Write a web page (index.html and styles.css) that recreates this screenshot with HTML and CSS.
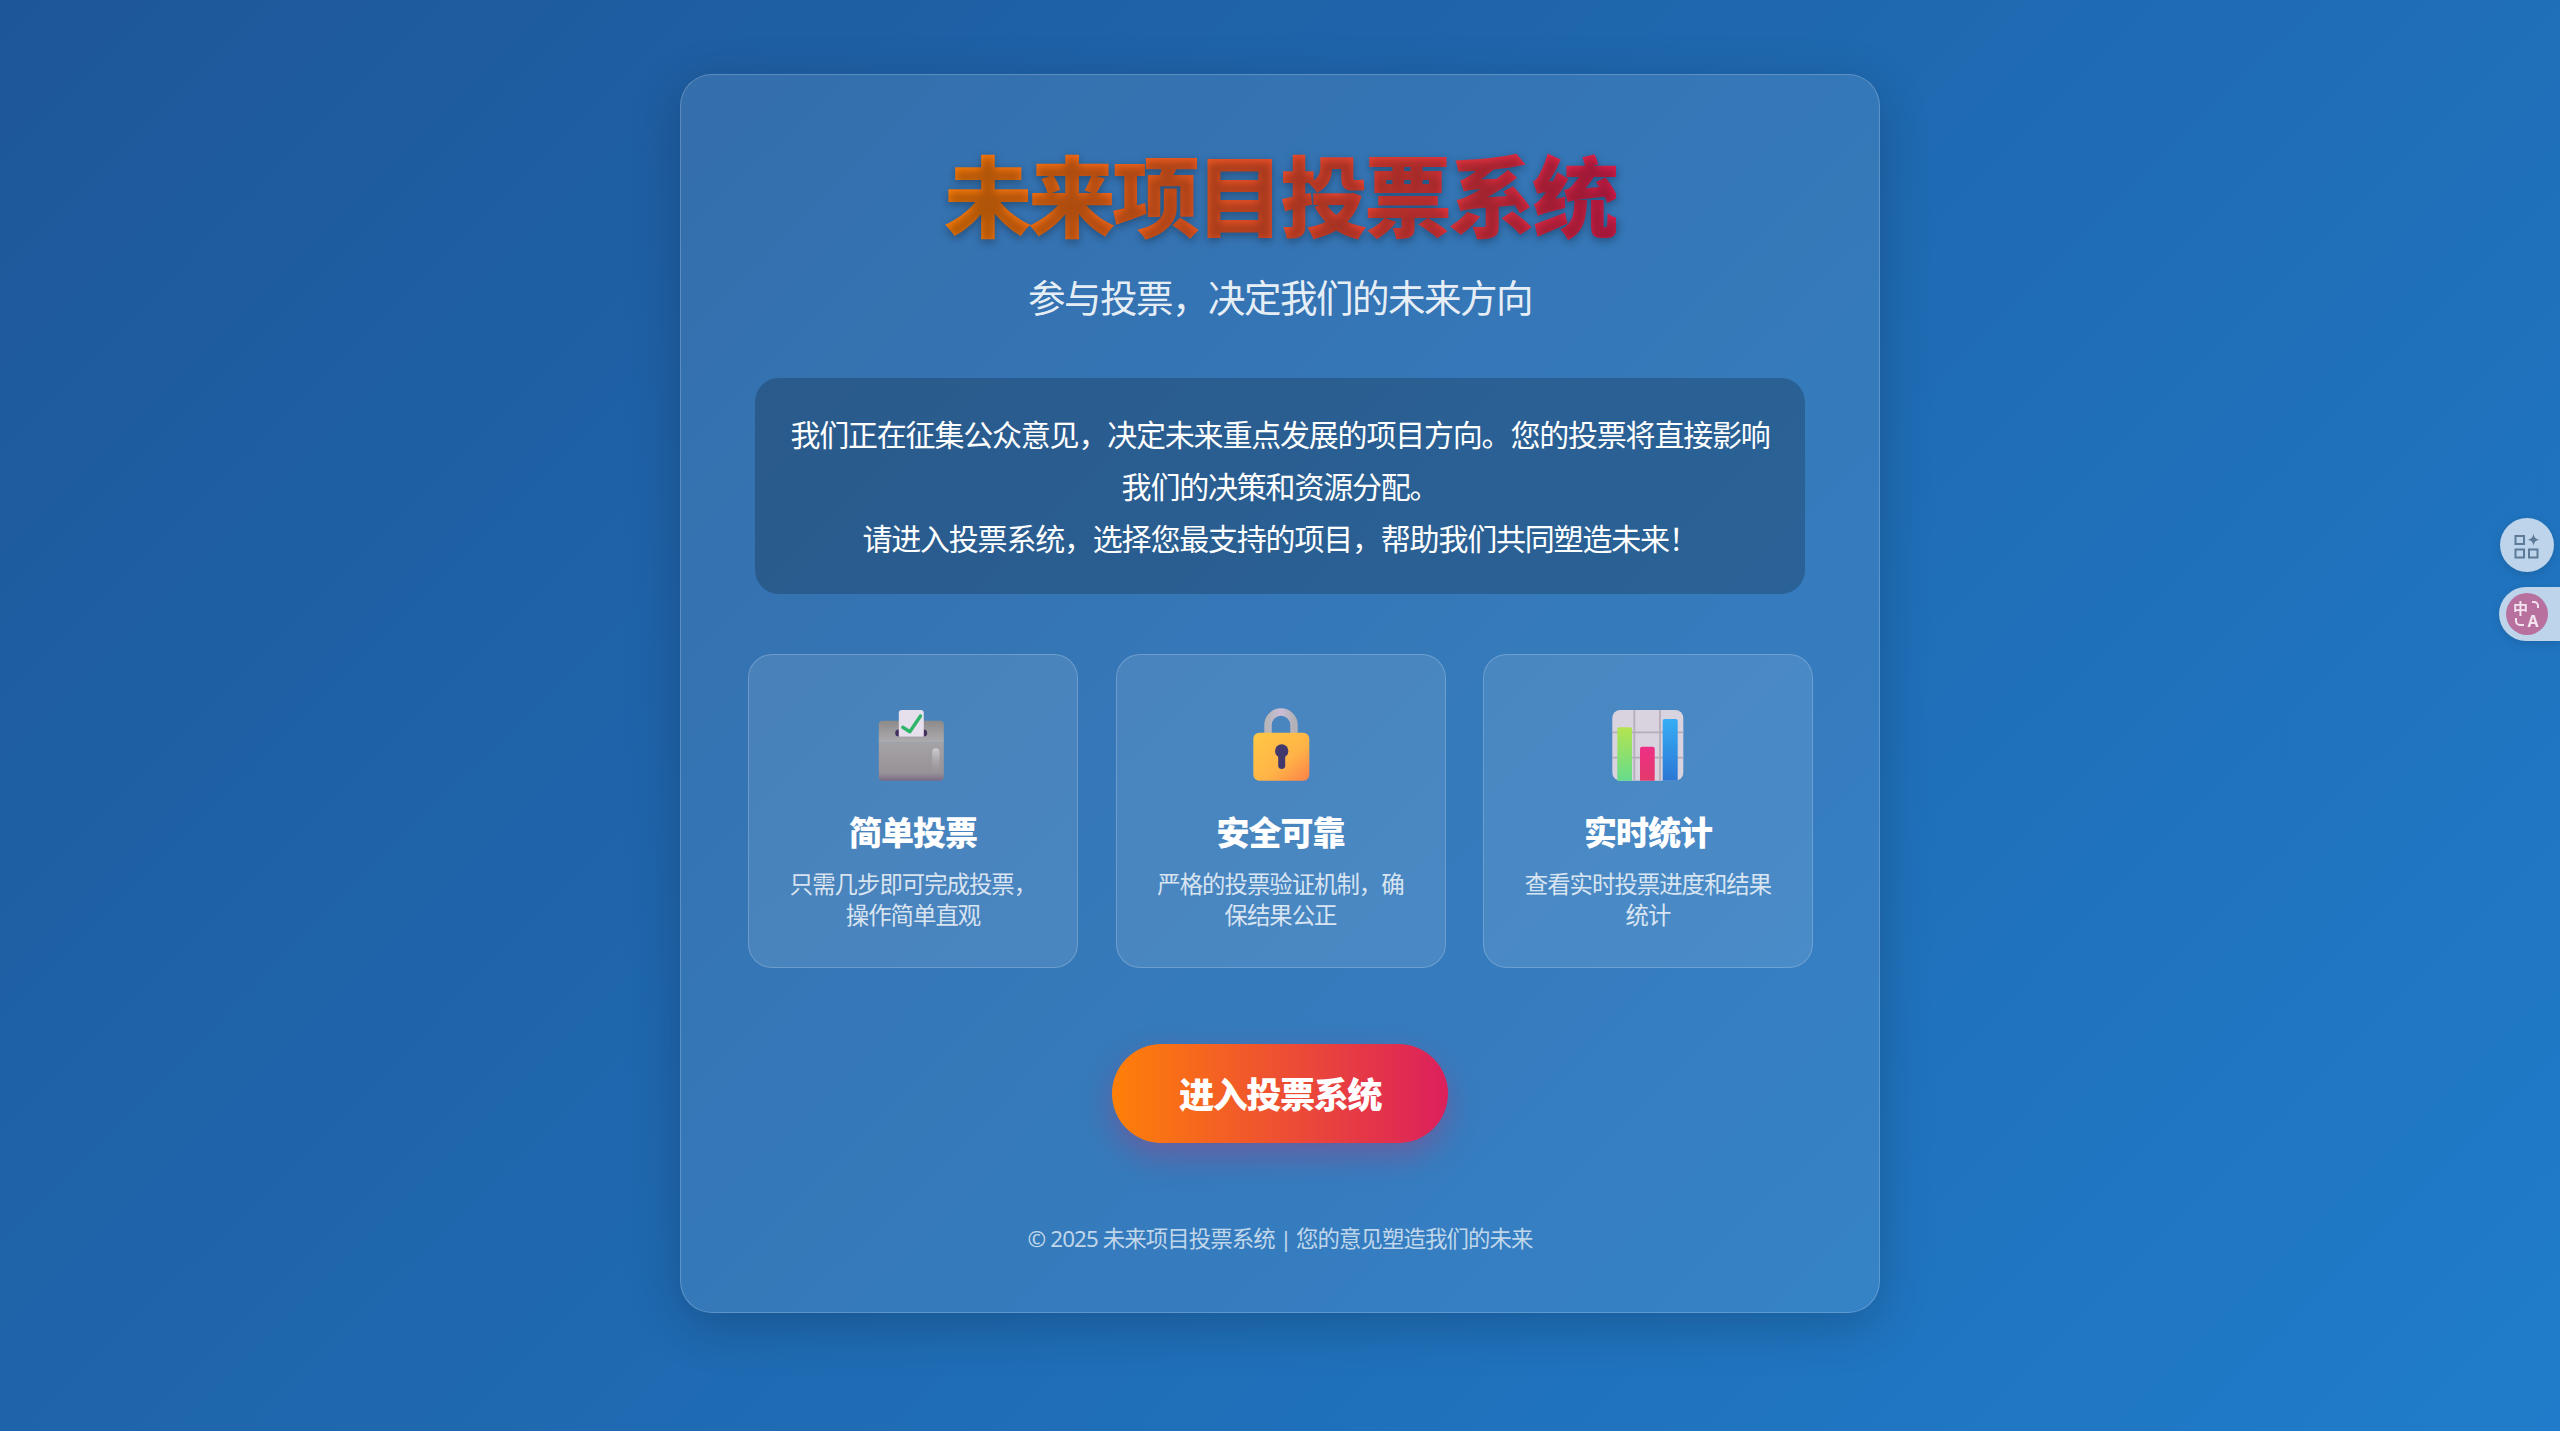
FILE: index.html
```html
<!DOCTYPE html>
<html lang="zh-CN">
<head>
    <meta charset="UTF-8">
    <meta name="viewport" content="width=device-width, initial-scale=1.0">
    <title>未来项目投票系统</title>
    <link rel="stylesheet" href="styles.css">
</head>
<body>
    <main class="panel">
        <h1 class="title">未来项目投票系统</h1>
        <p class="subtitle">参与投票&#xFF0C;决定我们的未来方向</p>

        <div class="info">
            <p>我们正在征集公众意见&#xFF0C;决定未来重点发展的项目方向&#x3002;您的投票将直接影响<br>我们的决策和资源分配&#x3002;</p>
            <p>请进入投票系统&#xFF0C;选择您最支持的项目&#xFF0C;帮助我们共同塑造未来&#xFF01;</p>
        </div>

        <div class="features">
            <div class="feature">
                <svg class="feature-icon" viewBox="0 0 76 76">
                    <defs>
                        <linearGradient id="boxTop" x1="0" y1="0" x2="0" y2="1">
                            <stop offset="0" stop-color="#8d8a8a"/>
                            <stop offset="1" stop-color="#aeacae"/>
                        </linearGradient>
                        <linearGradient id="boxBody" x1="0" y1="0" x2="0" y2="1">
                            <stop offset="0" stop-color="#a5a2a5"/>
                            <stop offset="0.8" stop-color="#979297"/>
                            <stop offset="1" stop-color="#7b6a86"/>
                        </linearGradient>
                        <linearGradient id="boxShine" x1="0" y1="0" x2="0" y2="1">
                            <stop offset="0" stop-color="#cfcdd0"/>
                            <stop offset="1" stop-color="#a09da0" stop-opacity="0.3"/>
                        </linearGradient>
                    </defs>
                    <path d="M3.8 35.7V17.7a4 4 0 0 1 4-4h57a4 4 0 0 1 4 4v18z" fill="url(#boxTop)"/>
                    <path d="M3.8 35.7h65v34a4 4 0 0 1-4 4h-57a4 4 0 0 1-4-4z" fill="url(#boxBody)"/>
                    <rect x="20.2" y="22.5" width="32" height="7" rx="3.5" fill="#43305f"/>
                    <path d="M23.8 29.7V6a3 3 0 0 1 3-3h19a3 3 0 0 1 3 3v23.7z" fill="#e6e0ec"/>
                    <path d="M27.8 20.3l7 4.4L45.5 9" fill="none" stroke="#2fb56a" stroke-width="3.4" stroke-linecap="round" stroke-linejoin="round"/>
                    <rect x="57.2" y="41.3" width="7.3" height="22" rx="3.6" fill="url(#boxShine)"/>
                </svg>
                <h3>简单投票</h3>
                <p>只需几步即可完成投票&#xFF0C;操作简单直观</p>
            </div>
            <div class="feature">
                <svg class="feature-icon" viewBox="0 0 76 76">
                    <defs>
                        <linearGradient id="lockBody" x1="0" y1="0" x2="1" y2="1">
                            <stop offset="0" stop-color="#ffc844"/>
                            <stop offset="0.6" stop-color="#ffb347"/>
                            <stop offset="1" stop-color="#fb8148"/>
                        </linearGradient>
                        <linearGradient id="lockBar" x1="0" y1="0" x2="1" y2="0">
                            <stop offset="0" stop-color="#b8b6ba"/>
                            <stop offset="0.5" stop-color="#cbbdd6"/>
                            <stop offset="1" stop-color="#b2b1b6"/>
                        </linearGradient>
                    </defs>
                    <path d="M25 28V18a13 13 0 0 1 26 0v10" fill="none" stroke="url(#lockBar)" stroke-width="7.4"/>
                    <rect x="10.3" y="25.7" width="56" height="48" rx="6" fill="url(#lockBody)"/>
                    <circle cx="38.7" cy="44" r="6.7" fill="#43386b"/>
                    <rect x="35.2" y="44" width="7" height="18" rx="3.4" fill="#43386b"/>
                </svg>
                <h3>安全可靠</h3>
                <p>严格的投票验证机制&#xFF0C;确保结果公正</p>
            </div>
            <div class="feature">
                <svg class="feature-icon" viewBox="0 0 76 76">
                    <defs>
                        <linearGradient id="barGreen" x1="0" y1="0" x2="0" y2="1">
                            <stop offset="0" stop-color="#b4e44f"/>
                            <stop offset="1" stop-color="#66dc8c"/>
                        </linearGradient>
                        <linearGradient id="barPink" x1="0" y1="0" x2="0" y2="1">
                            <stop offset="0" stop-color="#ee2f86"/>
                            <stop offset="1" stop-color="#e33a6c"/>
                        </linearGradient>
                        <linearGradient id="barBlue" x1="0" y1="0" x2="0" y2="1">
                            <stop offset="0" stop-color="#37adf6"/>
                            <stop offset="1" stop-color="#2b77d4"/>
                        </linearGradient>
                    </defs>
                    <rect x="2.3" y="3" width="71" height="70.7" rx="8" fill="#d9d3df"/>
                    <path d="M24.3 3v70.7M50 3v70.7M2.3 25.3h71M2.3 50.7h71" stroke="#b5aeb9" stroke-width="1.800"/>
                    <path d="M7.3 73.7V22.3a2 2 0 0 1 2-2h10.7a2 2 0 0 1 2 2v51.4z" fill="url(#barGreen)"/>
                    <path d="M30 73.7V41.7a2 2 0 0 1 2-2h10.7a2 2 0 0 1 2 2v32z" fill="url(#barPink)"/>
                    <path d="M52.7 73.7V14a2 2 0 0 1 2-2h11a2 2 0 0 1 2 2v59.7z" fill="url(#barBlue)"/>
                </svg>
                <h3>实时统计</h3>
                <p>查看实时投票进度和结果统计</p>
            </div>
        </div>

        <button class="enter-btn">进入投票系统</button>

        <footer class="footer">© 2025 未来项目投票系统 | 您的意见塑造我们的未来</footer>
    </main>

    <div class="side-btn">
        <svg viewBox="0 0 54 54" width="54" height="54">
            <path d="M15.500 18h8.500v8h-8.500zM15.500 31.500h8.500v8h-8.500zM29 31.500h8.500v8H29z" fill="none" stroke="#5d7a98" stroke-width="2"/>
            <path d="M33.500 15.500c.6 4 2 5.500 6 6.200-4 .7-5.400 2.200-6 6.200-.6-4-2-5.500-6-6.200 4-.7 5.400-2.200 6-6.200z" fill="#5d7a98"/>
        </svg>
    </div>
    <div class="side-pill">
        <div class="translate-dot">
            <svg viewBox="0 0 42 42" width="42" height="42">
                <text x="7" y="21" class="translate-zh">中</text>
                <text x="21.500" y="34" class="translate-en">A</text>
                <path d="M26 9h2a4 4 0 0 1 4 4v2M10 25v3a4 4 0 0 0 4 4h4" fill="none" stroke="#f3e3ee" stroke-width="2"/>
            </svg>
        </div>
    </div>
</body>
</html>
```

FILE: styles.css
```css
* {
    box-sizing: border-box;
}
html, body {
    height: 100%;
}
body {
    margin: 0;
    padding-top: 74px;
    overflow: hidden;
    font-family: "Noto Sans", "Noto Sans CJK SC", sans-serif;
    background: linear-gradient(135deg, #1e5799, #207cca);
    color: #fff;
    text-align: center;
}
.panel {
    width: 1200px;
    height: 1239px;
    margin: 0 auto;
    padding: 71px 66px 0;
    background: rgba(255, 255, 255, 0.1);
    border: 1px solid rgba(255, 255, 255, 0.2);
    border-radius: 32px;
    box-shadow: 0 13px 51px rgba(0, 0, 0, 0.2);
}
.title {
    width: fit-content;
    margin: 0 auto;
    font-size: 88px;
    line-height: 100px;
    font-weight: 900;
    letter-spacing: -4px;
    background: linear-gradient(90deg, #ff8008, #e01f50);
    -webkit-background-clip: text;
    background-clip: text;
    color: transparent;
    text-shadow: 0 3px 8px rgba(0, 0, 0, 0.3);
}
.subtitle {
    margin: 27px 0 0;
    font-size: 37.5px;
    line-height: 50px;
    letter-spacing: -1.5px;
    color: rgba(255, 255, 255, 0.9);
}
.info {
    margin: 55px 8px 0;
    padding: 31px 20px 29px;
    background: rgba(0, 0, 0, 0.2);
    border-radius: 24px;
    font-size: 30px;
    line-height: 51.84px;
    letter-spacing: -1.2px;
}
.info p {
    margin: 0;
}
.features {
    display: grid;
    grid-template-columns: repeat(3, 330px);
    justify-content: space-between;
    margin: 60px 0 0 1px;
}
.feature {
    height: 314px;
    padding: 52px 32px 0;
    background: rgba(255, 255, 255, 0.1);
    border: 1px solid rgba(255, 255, 255, 0.2);
    border-radius: 24px;
}
.feature-icon {
    display: block;
    width: 76px;
    height: 76px;
    margin: 0 auto;
}
.feature h3 {
    margin: 26px 0 0;
    font-size: 33px;
    line-height: 48px;
    font-weight: 900;
    letter-spacing: -1px;
}
.feature p {
    margin: 12px 0 0;
    font-size: 23.4px;
    line-height: 31px;
    letter-spacing: -1px;
    color: rgba(255, 255, 255, 0.8);
}
.enter-btn {
    display: block;
    width: 336px;
    height: 99px;
    margin: 76px auto 0;
    padding: 0 0 2px;
    border: none;
    border-radius: 50px;
    background: linear-gradient(90deg, #ff8008, #dc1f5c);
    box-shadow: 0 13px 32px rgba(220, 31, 92, 0.3);
    font-family: inherit;
    font-size: 35.2px;
    font-weight: 900;
    letter-spacing: -1.5px;
    color: #fff;
    cursor: pointer;
}
.footer {
    margin-top: 80px;
    font-size: 22.4px;
    line-height: 32px;
    letter-spacing: -0.9px;
    color: rgba(255, 255, 255, 0.7);
}
.side-btn {
    position: fixed;
    left: 2500px;
    top: 518px;
    width: 54px;
    height: 54px;
    border-radius: 50%;
    background: #bdd4ea;
    box-shadow: 0 3px 10px rgba(0, 0, 0, 0.12);
}
.side-btn svg {
    display: block;
}
.side-pill {
    position: fixed;
    left: 2499px;
    top: 587px;
    right: 0;
    height: 54px;
    padding: 6px 0 0 7px;
    background: #bdd4ea;
    border-radius: 27px 0 0 27px;
    box-shadow: 0 3px 10px rgba(0, 0, 0, 0.12);
}
.translate-dot {
    width: 42px;
    height: 42px;
    border-radius: 50%;
    background: #b8709f;
}
.translate-dot svg {
    display: block;
}
.translate-zh {
    font-size: 15px;
    font-weight: 700;
    fill: #f3e3ee;
}
.translate-en {
    font-size: 16px;
    font-weight: 700;
    fill: #f3e3ee;
}
```
